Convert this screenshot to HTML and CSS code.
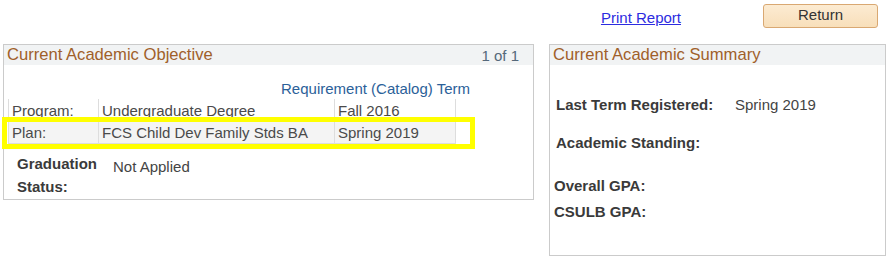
FILE: index.html
```html
<!DOCTYPE html>
<html>
<head>
<meta charset="utf-8">
<link rel="stylesheet" href="styles.css">
</head>
<body>
<div class="page">
  <div class="topbar">
    <a class="print-link" href="#">Print Report</a>
    <button class="return-btn" type="button">Return</button>
  </div>
  <div class="main">
    <section class="box box-objective">
      <div class="box-header">
        <span class="box-title">Current Academic Objective</span>
        <span class="pager">1 of 1</span>
      </div>
      <div class="req-head">Requirement (Catalog) Term</div>
      <table class="obj-table">
        <tr class="row-program">
          <td class="c1">Program:</td>
          <td class="c2">Undergraduate Degree</td>
          <td class="c3">Fall 2016</td>
        </tr>
        <tr class="row-plan">
          <td class="c1">Plan:</td>
          <td class="c2">FCS Child Dev Family Stds BA</td>
          <td class="c3">Spring 2019</td>
        </tr>
      </table>
      <div class="grad">
        <div class="grad-label">Graduation<br>Status:</div>
        <div class="grad-value">Not Applied</div>
      </div>
    </section>
    <section class="box box-summary">
      <div class="box-header">
        <span class="box-title">Current Academic Summary</span>
      </div>
      <div class="sum-row sum-last">
        <span class="sum-label">Last Term Registered:</span>
        <span class="sum-value">Spring 2019</span>
      </div>
      <div class="sum-row sum-standing">
        <span class="sum-label">Academic Standing:</span>
      </div>
      <div class="sum-row sum-overall">
        <span class="sum-label">Overall GPA:</span>
      </div>
      <div class="sum-row sum-csulb">
        <span class="sum-label">CSULB GPA:</span>
      </div>
    </section>
  </div>
  <div class="highlight"></div>
</div>
</body>
</html>
```

FILE: styles.css
```css
* { box-sizing: border-box; }
html, body { margin: 0; padding: 0; background: #ffffff; }
body {
  font-family: "Liberation Sans", Arial, sans-serif;
  font-size: 15px;
  color: #444444;
}
.page { position: relative; width: 892px; height: 258px; }

.topbar {
  height: 44px;
  display: flex;
  justify-content: flex-end;
  align-items: flex-start;
  padding-right: 14px;
}
.print-link {
  margin-top: 9px;
  margin-right: 82px;
  color: #2c2ce0;
  text-decoration: underline;
  font-size: 15px;
  line-height: 18px;
}
.return-btn {
  margin-top: 4px;
  width: 115px;
  height: 24px;
  border: 1px solid #d9a872;
  border-radius: 3px;
  background: linear-gradient(#fcebd2, #f8dfba);
  font-family: "Liberation Sans", Arial, sans-serif;
  font-size: 15px;
  color: #333333;
  padding: 0 0 3px;
}

.main {
  display: flex;
  align-items: flex-start;
  padding-left: 3px;
  gap: 15px;
}
.box {
  border: 1px solid #cbcbcb;
  background: #ffffff;
}
.box-objective { width: 531px; height: 156px; }
.box-summary { width: 337px; height: 212px; }

.box-header {
  height: 20px;
  background: #f1f3f4;
  display: flex;
  justify-content: space-between;
  align-items: center;
  padding: 0 14px 0 3px;
}
.box-title {
  font-size: 16.6px;
  color: #a0602a;
}
.pager {
  font-size: 15px;
  color: #55687a;
}

.req-head {
  height: 34px;
  padding-top: 15px;
  padding-right: 63px;
  text-align: right;
  color: #2b6199;
  font-size: 15px;
  line-height: 18px;
}

.obj-table {
  margin-left: 4px;
  width: 448px;
  border-collapse: collapse;
  font-size: 15px;
}
.obj-table td {
  padding: 0 0 0 3px;
  border-left: 1px solid #dddddd;
  border-right: 1px solid #dddddd;
  color: #4a4a4a;
  white-space: nowrap;
}
.obj-table .c1 { width: 90px; }
.obj-table .c2 { width: 236px; }
.row-program td { height: 22px; padding-top: 2px; }
.row-plan td {
  height: 22px;
  background: #f4f4f4;
  border-top: 1px solid #dddddd;
  border-bottom: 1px solid #dddddd;
}

.grad {
  display: flex;
  padding-left: 13px;
  padding-top: 8px;
}
.grad-label {
  width: 96px;
  font-weight: bold;
  color: #3a3a3a;
  line-height: 23px;
}
.grad-value {
  padding-top: 6px;
  line-height: 18px;
}

.sum-row {
  display: flex;
  line-height: 20px;
  padding-left: 6px;
}
.sum-label {
  font-weight: bold;
  color: #3a3a3a;
  width: 179px;
}
.sum-last { margin-top: 30px; }
.sum-standing { margin-top: 18px; }
.sum-overall { margin-top: 23px; padding-left: 4px; }
.sum-csulb { margin-top: 6px; padding-left: 4px; }

.highlight {
  position: absolute;
  left: 2px;
  top: 117px;
  width: 473px;
  height: 32px;
  border: 5px solid #ffff00;
  pointer-events: none;
}
```
